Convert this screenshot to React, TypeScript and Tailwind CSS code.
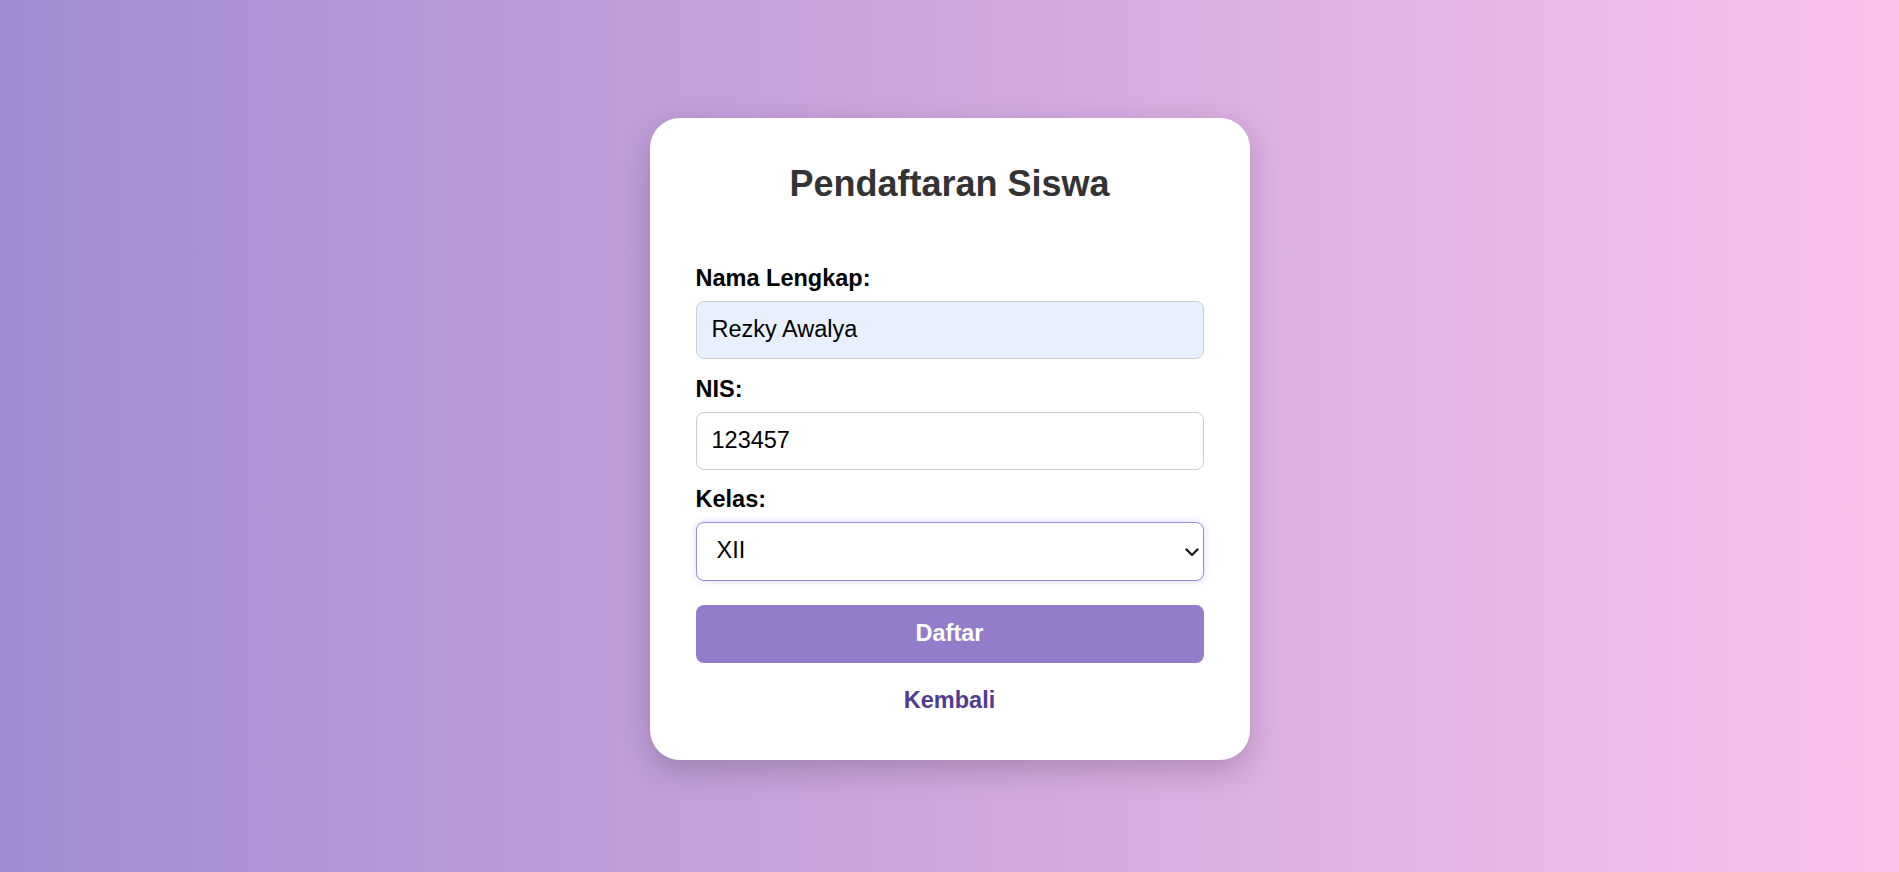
import React from "react";

export default function App() {
  return (
    <div
      className="w-full min-h-screen h-[872px] flex items-center justify-center pt-[5px] bg-[linear-gradient(to_right,#a18cd1,#fbc2eb)]"
      style={{ fontFamily: '"Liberation Sans", Arial, sans-serif' }}
    >
      <div className="w-[600px] bg-white rounded-[30px] pt-[45px] px-[46px] pb-[46px] shadow-[0_10px_30px_rgba(0,0,0,0.2)]">
        <h2 className="text-center text-[36px] leading-[42px] font-bold text-[#333]">
          Pendaftaran Siswa
        </h2>
        <form className="mt-[60px] flex flex-col" onSubmit={(e) => e.preventDefault()}>
          <label className="block text-[23.5px] leading-[27px] font-bold text-black mb-[9px]">
            Nama Lengkap:
          </label>
          <input
            type="text"
            defaultValue="Rezky Awalya"
            className="w-full h-[58px] px-[15px] text-[23.5px] text-black bg-[#e8f0fe] border border-[#cccccc] rounded-[8px] outline-none mb-[17px]"
          />
          <label className="block text-[23.5px] leading-[27px] font-bold text-black mb-[9px]">
            NIS:
          </label>
          <input
            type="text"
            defaultValue="123457"
            className="w-full h-[58px] px-[15px] text-[23.5px] text-black bg-white border border-[#cccccc] rounded-[8px] outline-none mb-[16px]"
          />
          <label className="block text-[23.5px] leading-[27px] font-bold text-black mb-[9px]">
            Kelas:
          </label>
          <div className="relative">
            <select
              defaultValue="XII"
              className="appearance-none w-full h-[59px] pl-[20px] pr-[30px] text-[23.5px] text-black bg-white border border-[#a18cd1] rounded-[8px] outline-none shadow-[0_0_7px_rgba(110,150,255,0.35)]"
            >
              <option value="X">X</option>
              <option value="XI">XI</option>
              <option value="XII">XII</option>
            </select>
            <svg
              className="absolute right-[5px] top-[26px] pointer-events-none"
              width="14"
              height="9"
              viewBox="0 0 14 9"
              fill="none"
            >
              <path d="M1.5 1.5 L7 7 L12.5 1.5" stroke="#111" strokeWidth="2.2" strokeLinecap="round" strokeLinejoin="round" />
            </svg>
          </div>
          <button
            type="submit"
            className="mt-[24px] w-full h-[58px] rounded-[8px] bg-[#937dca] text-white text-[23.5px] font-bold"
          >
            Daftar
          </button>
          <a
            href="#"
            className="mt-[24px] block text-center text-[23.5px] leading-[27px] font-bold text-[#503d92] no-underline"
          >
            Kembali
          </a>
        </form>
      </div>
    </div>
  );
}
